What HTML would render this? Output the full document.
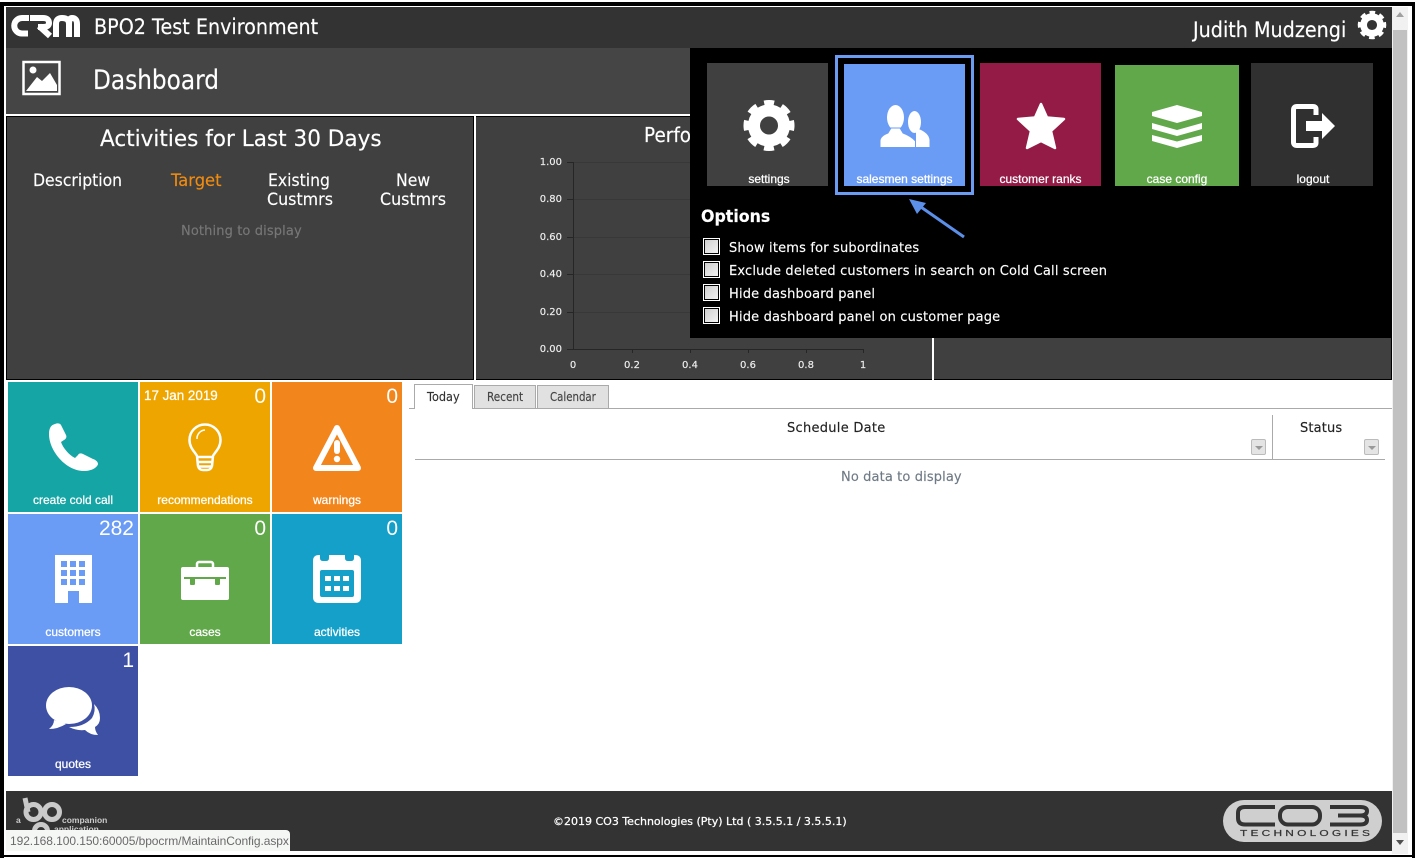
<!DOCTYPE html>
<html><head><meta charset="utf-8"><title>Dashboard</title>
<style>
html,body{margin:0;padding:0;width:1415px;height:858px;overflow:hidden;background:#fff}
div,span{position:absolute;display:block}
.t{white-space:nowrap;font-family:"DejaVu Sans",sans-serif;color:#fff;transform-origin:0 50%;line-height:20px;height:20px;-webkit-text-stroke:.15px}
.a{white-space:nowrap;font-family:"Liberation Sans",Arial,sans-serif;color:#fff;font-size:12px;text-align:center;line-height:14px;height:14px;-webkit-text-stroke:.25px}
.n{white-space:nowrap;font-family:"Liberation Sans",Arial,sans-serif;color:#fff;font-size:21px;text-align:right;line-height:24px;height:24px}
svg{position:absolute;left:0;top:0}
.cb{width:13px;height:13px;left:704px;background:linear-gradient(135deg,#cfcfcf,#f2f2f2);border:1px solid #000;outline:1px solid #fff}
.opt{left:729px;font-size:13px;letter-spacing:.17px}
.yl{font-size:10px;left:527px;width:35px;text-align:right;color:#eee}
.xl{font-size:10px;width:30px;text-align:center;color:#eee;top:356px}
.tab{background:#e1e1e1;border:1px solid #aaa;border-bottom:1px solid #aaa;box-sizing:border-box;top:385px;height:24px}
.fb{width:15px;height:16px;top:439px;box-sizing:border-box;border:1px solid #bbb;border-radius:2px;background:#e4e4e4}
.fb:after{content:"";position:absolute;left:3px;top:6px;border:4px solid transparent;border-top:4px solid #999;border-bottom:0}
</style></head><body>
<!-- outer frame -->
<div style="left:0;top:2px;width:1415px;height:4px;background:#000"></div>
<div style="left:0;top:2px;width:4px;height:856px;background:#000"></div>
<div style="left:1412px;top:2px;width:3px;height:856px;background:#000"></div>
<div style="left:0;top:855px;width:1415px;height:2px;background:#000"></div>
<!-- header -->
<div style="left:6px;top:7px;width:1386px;height:41px;background:#333"></div>
<div style="left:6px;top:48px;width:1386px;height:66px;background:#454545"></div>
<!-- panels -->
<div style="left:6px;top:116px;width:468px;height:264px;background:#404040;box-sizing:border-box;border:1px solid #000"></div>
<div style="left:476px;top:116px;width:456px;height:264px;background:#404040;box-sizing:border-box;border-top:1px solid #000;border-bottom:1px solid #000"></div>
<div style="left:934px;top:116px;width:458px;height:264px;background:#404040;box-sizing:border-box;border:1px solid #000;border-left:0"></div>
<!-- scrollbar -->
<div style="left:1392px;top:7px;width:16px;height:847px;background:#f1f1f1"></div>
<div style="left:1393px;top:30px;width:14px;height:803px;background:#c1c1c1"></div>
<div style="left:1396px;top:12px;border:4px solid transparent;border-bottom:5px solid #a0a0a0;border-top:0"></div>
<div style="left:1396px;top:840px;border:4px solid transparent;border-top:5px solid #505050;border-bottom:0"></div>
<!-- chart -->
<svg width="1415" height="858" fill="none">
<g stroke="#383838" stroke-width="1">
<path d="M573 162.500H863M573 199.500H863M573 237.500H863M573 274.500H863M573 312.500H863"/>
</g>
<g stroke="#262626" stroke-width="1">
<path d="M573.500 162V350M567 349.500H864M567 162.500H573M567 199.500H573M567 237.500H573M567 274.500H573M567 312.500H573M632.500 349V353M690.500 349V353M748.500 349V353M806.500 349V353M863.500 349V353"/>
</g>
</svg>
<div class="t yl" style="top:153px">1.00</div>
<div class="t yl" style="top:190px">0.80</div>
<div class="t yl" style="top:228px">0.60</div>
<div class="t yl" style="top:265px">0.40</div>
<div class="t yl" style="top:303px">0.20</div>
<div class="t yl" style="top:340px">0.00</div>
<div class="t xl" style="left:558px">0</div>
<div class="t xl" style="left:617px">0.2</div>
<div class="t xl" style="left:675px">0.4</div>
<div class="t xl" style="left:733px">0.6</div>
<div class="t xl" style="left:791px">0.8</div>
<div class="t xl" style="left:848px">1</div>
<div class="t" style="left:644px;top:125px;font-size:20px;width:60px;transform:scaleX(.92)">Perfo</div>
<!-- header text -->
<div class="t" style="left:94px;top:17px;font-size:21px;transform:scaleX(.912)">BPO2 Test Environment</div>
<div class="t" style="left:1193px;top:20px;font-size:21px;transform:scaleX(.912)">Judith Mudzengi</div>
<div class="t" style="left:93px;top:71px;font-size:27px;transform:scaleX(.86)">Dashboard</div>
<div class="t" style="left:100px;top:130px;font-size:22px;transform:scaleX(.98)">Activities for Last 30 Days</div>
<div class="t" style="left:33px;top:171px;font-size:17px;transform:scaleX(.92)">Description</div>
<div class="t" style="left:171px;top:171px;font-size:17px;color:#f28c0f;transform:scaleX(.96)">Target</div>
<div class="t" style="left:268px;top:171px;font-size:17px;transform:scaleX(.92)">Existing</div>
<div class="t" style="left:267px;top:190px;font-size:17px;transform:scaleX(.935)">Custmrs</div>
<div class="t" style="left:396px;top:171px;font-size:17px;transform:scaleX(.92)">New</div>
<div class="t" style="left:380px;top:190px;font-size:17px;transform:scaleX(.935)">Custmrs</div>
<div class="t" style="left:181px;top:222px;font-size:13px;color:#777;letter-spacing:.12px">Nothing to display</div>
<!-- popup -->
<div style="left:690px;top:48px;width:702px;height:290px;background:#000"></div>
<div style="left:835px;top:55px;width:139px;height:140px;box-sizing:border-box;border:3px solid #6c9cf2"></div>
<div style="left:707px;top:63px;width:121px;height:123px;background:#404040"></div>
<div style="left:844px;top:64px;width:121px;height:122px;background:#6b9cf5"></div>
<div style="left:980px;top:63px;width:121px;height:123px;background:#941b46"></div>
<div style="left:1115px;top:65px;width:124px;height:121px;background:#60a84a"></div>
<div style="left:1251px;top:63px;width:122px;height:123px;background:#303030"></div>
<div class="a" style="left:707px;top:172px;width:124px">settings</div>
<div class="a" style="left:844px;top:172px;width:121px">salesmen settings</div>
<div class="a" style="left:980px;top:172px;width:121px">customer ranks</div>
<div class="a" style="left:1115px;top:172px;width:124px">case config</div>
<div class="a" style="left:1251px;top:172px;width:124px">logout</div>
<div class="t" style="left:701px;top:207px;font-size:17px;font-weight:bold;transform:scaleX(.93)">Options</div>
<div class="cb" style="top:239px"></div>
<div class="cb" style="top:262px"></div>
<div class="cb" style="top:285px"></div>
<div class="cb" style="top:308px"></div>
<div class="t opt" style="top:239px">Show items for subordinates</div>
<div class="t opt" style="top:262px">Exclude deleted customers in search on Cold Call screen</div>
<div class="t opt" style="top:285px">Hide dashboard panel</div>
<div class="t opt" style="top:308px">Hide dashboard panel on customer page</div>
<!-- tiles -->
<div style="left:8px;top:382px;width:130px;height:130px;background:#16a5a5"></div>
<div style="left:140px;top:382px;width:130px;height:130px;background:#efa500"></div>
<div style="left:272px;top:382px;width:130px;height:130px;background:#f2851c"></div>
<div style="left:8px;top:514px;width:130px;height:130px;background:#6b9cf5"></div>
<div style="left:140px;top:514px;width:130px;height:130px;background:#60a84a"></div>
<div style="left:272px;top:514px;width:130px;height:130px;background:#14a0c8"></div>
<div style="left:8px;top:646px;width:130px;height:130px;background:#3e50a4"></div>
<div class="a" style="left:8px;top:493px;width:130px">create cold call</div>
<div class="a" style="left:140px;top:493px;width:130px">recommendations</div>
<div class="a" style="left:272px;top:493px;width:130px">warnings</div>
<div class="a" style="left:8px;top:625px;width:130px">customers</div>
<div class="a" style="left:140px;top:625px;width:130px">cases</div>
<div class="a" style="left:272px;top:625px;width:130px">activities</div>
<div class="a" style="left:8px;top:757px;width:130px">quotes</div>
<div class="a" style="left:144px;top:389px;font-size:13.400px;line-height:14px">17 Jan 2019</div>
<div class="n" style="left:216px;top:385px;width:50px">0</div>
<div class="n" style="left:348px;top:385px;width:50px">0</div>
<div class="n" style="left:74px;top:517px;width:60px">282</div>
<div class="n" style="left:216px;top:517px;width:50px">0</div>
<div class="n" style="left:348px;top:517px;width:50px">0</div>
<div class="n" style="left:84px;top:649px;width:50px">1</div>
<!-- tabs -->
<div style="left:409px;top:408px;width:983px;height:1px;background:#aaa"></div>
<div style="left:414px;top:384px;width:59px;height:25px;box-sizing:border-box;background:#fff;border:1px solid #aaa;border-bottom:0"></div>
<div class="tab" style="left:474px;width:62px"></div>
<div class="tab" style="left:537px;width:72px"></div>
<div class="t" style="left:427px;top:387px;font-size:12px;color:#333;transform:scaleX(.94)">Today</div>
<div class="t" style="left:487px;top:387px;font-size:12px;color:#444;transform:scaleX(.87)">Recent</div>
<div class="t" style="left:550px;top:387px;font-size:12px;color:#444;transform:scaleX(.85)">Calendar</div>
<!-- grid -->
<div style="left:415px;top:459px;width:970px;height:1px;background:#aaa"></div>
<div style="left:1272px;top:415px;width:1px;height:44px;background:#aaa"></div>
<div class="t" style="left:787px;top:419px;font-size:13px;color:#222;letter-spacing:.28px">Schedule Date</div>
<div class="t" style="left:1300px;top:419px;font-size:13px;color:#222;letter-spacing:.15px">Status</div>
<div class="fb" style="left:1251px"></div>
<div class="fb" style="left:1364px"></div>
<div class="t" style="left:841px;top:468px;font-size:13px;color:#6f7a85;letter-spacing:.12px">No data to display</div>
<!-- footer -->
<div style="left:6px;top:791px;width:1386px;height:60px;background:#333"></div>
<div class="t" style="left:553px;top:812px;font-size:11px;letter-spacing:0;-webkit-text-stroke:.25px">©2019 CO3 Technologies (Pty) Ltd ( 3.5.5.1 / 3.5.5.1)</div>
<div class="a" style="left:16px;top:813px;font-size:8.500px;color:#ccc;font-weight:bold;-webkit-text-stroke:0">a</div>
<div class="a" style="left:62px;top:813px;font-size:8.500px;color:#ccc;font-weight:bold;-webkit-text-stroke:0">companion</div>
<div class="a" style="left:54px;top:822px;font-size:8.500px;color:#ccc;font-weight:bold;-webkit-text-stroke:0">application</div>
<!-- icons -->
<svg width="1415" height="858" fill="none">
<!-- crm logo -->
<g stroke="#fff" stroke-width="6" fill="none">
<path d="M29 18H22A7 7 0 0 0 22 33.500H28"/>
<path d="M30 18H43Q49 18 49 23Q49 27 43 27H38M39 26L50 36"/>
<path d="M56 37V24Q56 18 62 18Q69 18 69 24V37M69 24Q69 18 72 18Q77 18 77 24V37"/>
</g>
<!-- photo icon -->
<rect x="23.500" y="62" width="36" height="32" stroke="#fff" stroke-width="2.500"/>
<circle cx="33" cy="70" r="3.500" fill="#fff"/>
<path d="M26 91L37 77L42 81L50 73L57 85V91Z" fill="#fff"/>
<!-- top gear -->
<g transform="translate(1372 25) scale(.56)">
<circle r="15" stroke="#fff" stroke-width="12"/>
<circle r="23" stroke="#fff" stroke-width="5" stroke-dasharray="10 8.060" transform="rotate(-12.500)"/>
</g>
<!-- settings gear -->
<g transform="translate(769 125.500)">
<circle r="15" stroke="#fff" stroke-width="12"/>
<circle r="23" stroke="#fff" stroke-width="5" stroke-dasharray="10 8.060" transform="rotate(-12.500)"/>
</g>
<!-- people -->
<g fill="#fff">
<ellipse cx="914.500" cy="122" rx="6.500" ry="11"/>
<path d="M916 147V128L921 130Q929 134 929.500 140V147Z"/>
<ellipse cx="895.500" cy="117.500" rx="8.500" ry="12.500"/>
<path d="M880 147.500V141Q880 136 888 133L891 128H900L903 133Q911 136 915.500 141V147.500Z" stroke="#6b9cf5" stroke-width="1"/>
</g>
<!-- star -->
<path d="M1041 104L1047 117.500L1064 119L1051 131L1055 148L1041 141L1027 148L1031 131L1018 119L1035 117.500Z" fill="#fff" stroke="#fff" stroke-width="2.500" stroke-linejoin="round"/>
<!-- layers -->
<g fill="#fff">
<path d="M1177 105L1202 112V116L1177 123L1152 116V112Z"/>
<path d="M1152 123L1177 130L1202 123V129L1177 136L1152 129Z"/>
<path d="M1152 135L1177 141.500L1202 135V141L1177 148L1152 141Z"/>
</g>
<!-- logout -->
<path d="M1316 115V109Q1316 106.500 1313 106.500H1297Q1293.500 106.500 1293.500 110V142Q1293.500 145.500 1297 145.500H1313Q1316 145.500 1316 143V137" stroke="#fff" stroke-width="5"/>
<path d="M1306 121H1322V113L1335 126L1322 139V131H1306Z" fill="#fff"/>
<!-- arrow -->
<path d="M964 237L918 205" stroke="#5b8fe8" stroke-width="3"/>
<path d="M909 199L926 203L917 214Z" fill="#5b8fe8"/>
<!-- phone -->
<path d="M55 424C57 423 60 423 61 425L66 435C67 437 66 439 64 440L61 442C63 448 69 455 75 458L78 455C79 453 81 453 83 454L93 459C96 460 98 462 98 464C97 468 91 471 84 471C66 471 49 451 49 434C49 428 51 425 55 424Z" fill="#fff"/>
<!-- bulb -->
<g stroke="#fff" stroke-width="2.500">
<path d="M197 456C195 452 189.500 448 189.500 440A15.500 15.500 0 0 1 220.500 440C220.500 448 215 452 213 456L212 466Q211 470 207 470H203Q199 470 198 466Z"/>
<path d="M197 457H213M198 462H212M199 466.500H211"/>
<path d="M197 439A8.500 8.500 0 0 1 205 430" stroke-width="1.500"/>
</g>
<!-- warning -->
<path d="M337 428L358 468H316Z" stroke="#fff" stroke-width="6" stroke-linejoin="round"/>
<path d="M337 443V451" stroke="#fff" stroke-width="6" stroke-linecap="round"/>
<circle cx="337" cy="459" r="3.200" fill="#fff"/>
<!-- building -->
<path fill-rule="evenodd" fill="#fff" d="M55 555H92V603H79V591H68V603H55ZM61 561V567H67V561ZM70 561V567H76V561ZM79 561V567H85V561ZM61 570V576H67V570ZM70 570V576H76V570ZM79 570V576H85V570ZM61 579V585H67V579ZM70 579V585H76V579ZM79 579V585H85V579Z"/>
<!-- briefcase -->
<rect x="197" y="562" width="16" height="7" rx="2" stroke="#fff" stroke-width="2.500"/>
<rect x="181" y="567" width="48" height="33" rx="2" fill="#fff"/>
<path d="M184 577H226V579H220V584Q220 585 218 585H216Q215 585 215 584V579H195V584Q195 585 193 585H191Q190 585 190 584V579H184Z" fill="#60a84a"/>
<!-- calendar -->
<path fill="#fff" fill-rule="evenodd" d="M319 555H320V558Q320 561 323 561H326Q329 561 329 558V555H345V558Q345 561 348 561H351Q354 561 354 558V555H355Q361 555 361 561V597Q361 603 355 603H319Q313 603 313 597V561Q313 555 319 555ZM322 570Q320 570 320 572V595Q320 597 322 597H352Q354 597 354 595V572Q354 570 352 570Z"/>
<path fill="#fff" d="M325 576h6v5h-6zM334 576h6v5h-6zM343 576h6v5h-6zM325 586h6v5h-6zM334 586h6v5h-6zM343 586h6v5h-6z"/>
<!-- quotes -->
<ellipse cx="69" cy="705.500" rx="23" ry="18.500" fill="#fff"/>
<path d="M54 720Q54 725 49 729Q58 729 66 724Z" fill="#fff"/>
<path d="M94 704Q100 710 100 718Q100 724 95 727Q95 731 98 735Q90 735 85 730Q77 731 69 727Q84 727 92 718Q96 711 94 704Z" fill="#fff"/>
<!-- bo logo -->
<g stroke="#c9c9c9" stroke-width="5">
<path d="M25 798L28 812"/>
<circle cx="33.500" cy="812" r="7.500"/>
<circle cx="52" cy="812" r="7.500"/>
<circle cx="41" cy="831" r="6.500"/>
</g>
<!-- co3 logo -->
<rect x="1223" y="800" width="159" height="42" rx="21" fill="#cfcfcf"/>
<g stroke="#333" stroke-width="4">
<path d="M1275 807H1245Q1238 807 1238 813V818Q1238 824.500 1245 824.500H1275"/>
<rect x="1280" y="807" width="40" height="17.500" rx="8"/>
<path d="M1330 807H1360Q1367 807 1367 811Q1367 815.500 1360 815.500H1338M1360 815.500Q1367 815.500 1367 820Q1367 824.500 1360 824.500H1330"/>
</g>
</svg>
<div class="a" style="left:1240px;top:827px;width:93px;font-size:8.500px;line-height:12px;color:#333;letter-spacing:2.300px;text-align:left;transform:scaleX(1.4);transform-origin:0 50%;-webkit-text-stroke:.2px">TECHNOLOGIES</div>
<!-- status bar -->
<div style="left:6px;top:830px;width:284px;height:21px;background:#f5f7f5;border-radius:0 4px 0 0"></div>
<div class="a" style="left:10px;top:834px;font-size:12px;color:#6a6a6a;letter-spacing:-.07px;-webkit-text-stroke:0">192.168.100.150:60005/bpocrm/MaintainConfig.aspx</div>
</body></html>
